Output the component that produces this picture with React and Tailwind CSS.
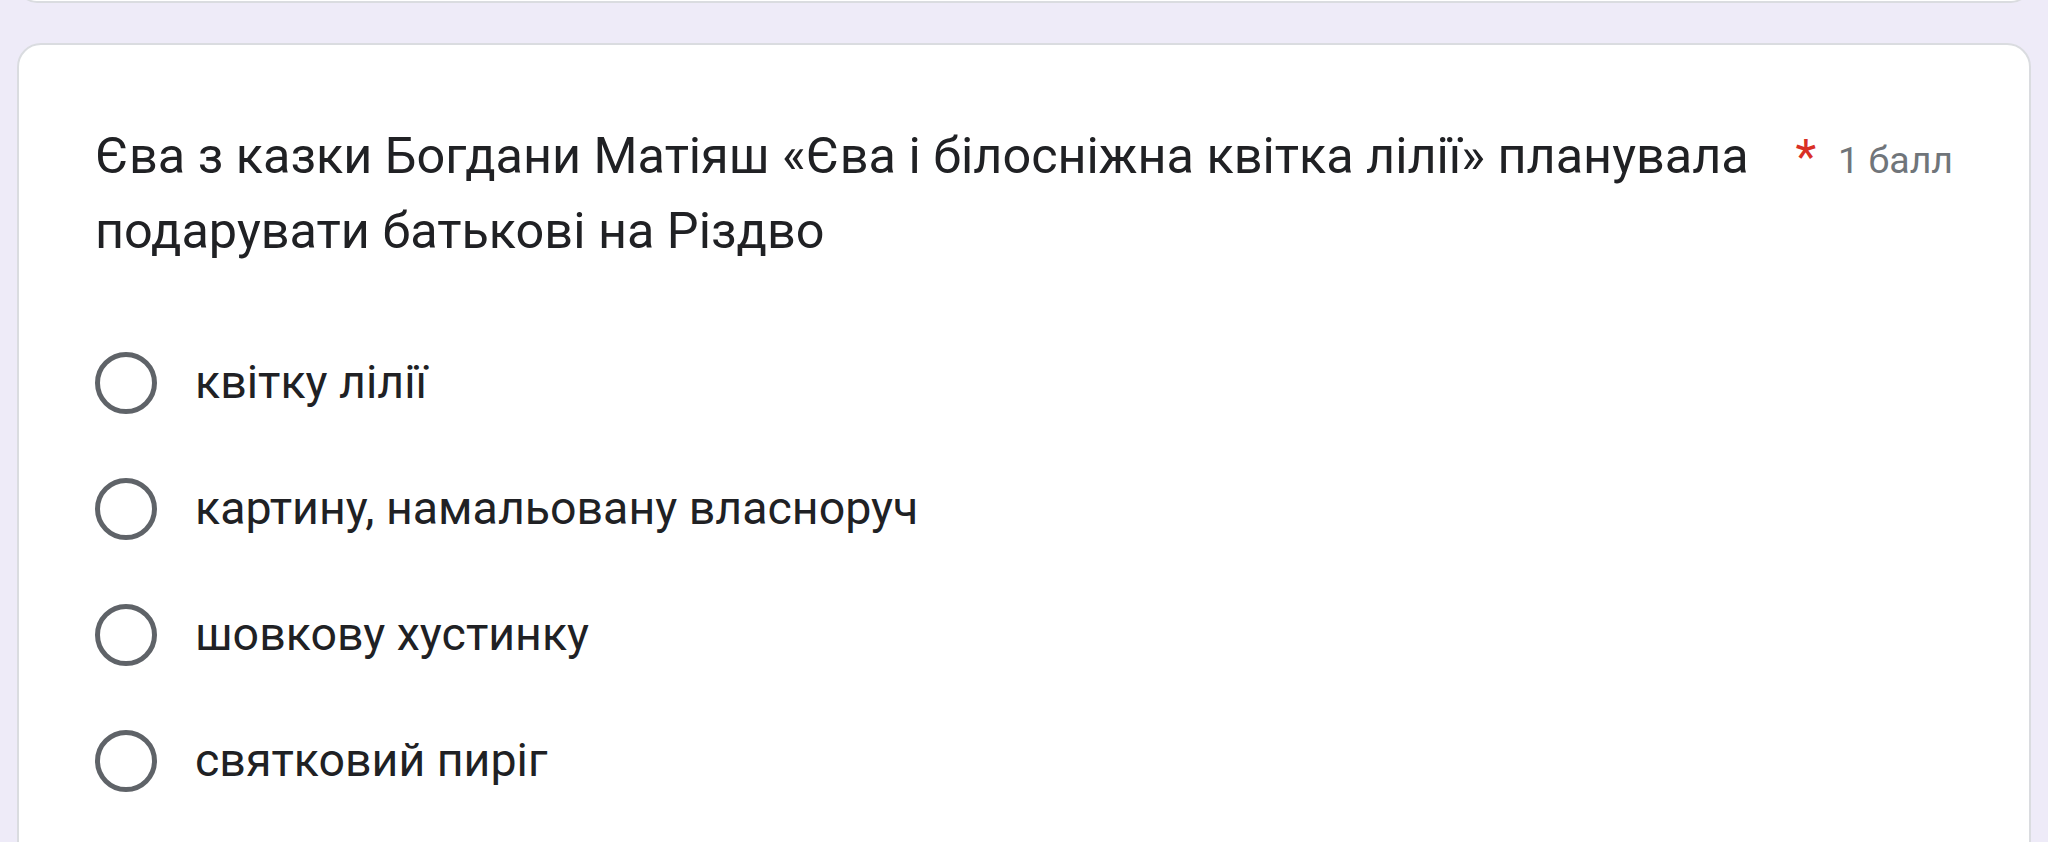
const options = [
    "квітку лілії",
    "картину, намальовану власноруч",
    "шовкову хустинку",
    "святковий пиріг",
];

const RadioOption = ({ label }) => (
    <div className="flex items-center h-[126px]">
        <div className="w-[62px] h-[62px] shrink-0 rounded-full border-[5px] border-[#5f6368]" />
        <span className="ml-[38px] text-[46.5px] text-[#202124]">{label}</span>
    </div>
);

export default function App() {
    return (
        <div
            className="min-h-screen bg-[#eeebf8] px-[17px] overflow-hidden"
            style={{ fontFamily: "Roboto, 'Noto Sans', sans-serif" }}
        >
            {/* previous question card, only its bottom edge shows */}
            <div className="h-[40px] -mt-[37px] bg-white border-2 border-[#dadce0] rounded-[24px]" />

            <div className="mt-[40px] bg-white border-2 border-[#dadce0] rounded-[24px] pt-[73px] px-[76px] pb-[40px]">
                <div className="flex items-baseline">
                    <div className="flex-1 text-[50.4px] leading-[75px] text-[#202124]">
                        Єва з казки Богдани Матіяш «Єва і білосніжна квітка лілії» планувала подарувати батькові на Різдво
                    </div>
                    <span className="ml-[40px] text-[48px] leading-[75px] text-[#d93025]">*</span>
                    <span className="ml-[22px] text-[37.5px] text-[#70757a]">1 балл</span>
                </div>

                <div className="mt-[52px]">
                    {options.map((o) => (
                        <RadioOption key={o} label={o} />
                    ))}
                </div>
            </div>
        </div>
    );
}
